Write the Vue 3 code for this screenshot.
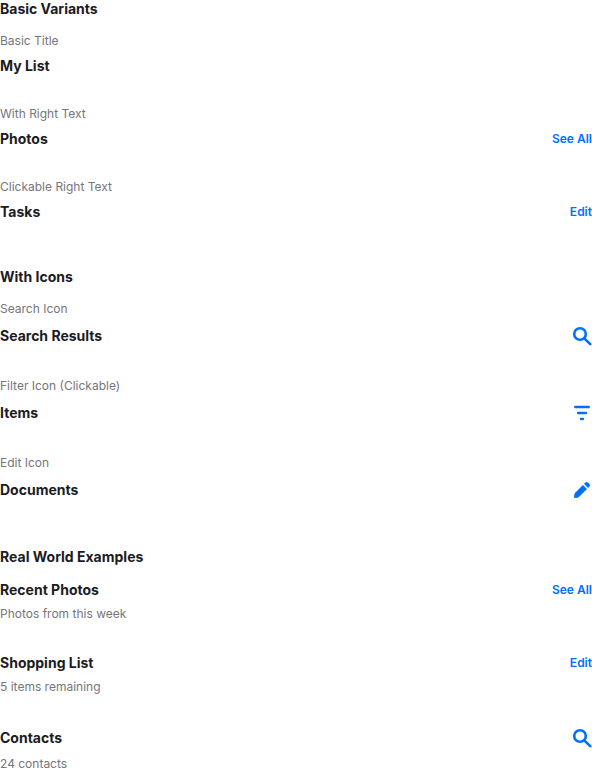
<script setup>
const sections = [
  {
    title: 'Basic Variants',
    items: [
      { caption: 'Basic Title', title: 'My List' },
      { caption: 'With Right Text', title: 'Photos', text: 'See All' },
      { caption: 'Clickable Right Text', title: 'Tasks', text: 'Edit' },
    ],
  },
  {
    title: 'With Icons',
    items: [
      { caption: 'Search Icon', title: 'Search Results', icon: 'search' },
      { caption: 'Filter Icon (Clickable)', title: 'Items', icon: 'filter' },
      { caption: 'Edit Icon', title: 'Documents', icon: 'edit' },
    ],
  },
  {
    title: 'Real World Examples',
    items: [
      { title: 'Recent Photos', text: 'See All', note: 'Photos from this week' },
      { title: 'Shopping List', text: 'Edit', note: '5 items remaining' },
      { title: 'Contacts', icon: 'search', note: '24 contacts' },
    ],
  },
]
</script>

<template>
  <main class="page">
    <section v-for="section in sections" :key="section.title" class="section">
      <h2 class="title">{{ section.title }}</h2>
      <div v-for="item in section.items" :key="item.title" class="item">
        <p v-if="item.caption" class="caption">{{ item.caption }}</p>
        <header class="row">
          <h3 class="title">{{ item.title }}</h3>
          <button v-if="item.text" type="button" class="action">{{ item.text }}</button>
          <button v-if="item.icon" type="button" class="action icon" :aria-label="item.icon">
            <svg v-if="item.icon === 'search'" viewBox="0 0 20 21" fill="none" stroke="currentColor" stroke-width="2.6" stroke-linecap="round">
              <circle cx="8" cy="9" r="5.8" />
              <path d="M12.3 13.3 18.2 19.2" />
            </svg>
            <svg v-else-if="item.icon === 'filter'" viewBox="0 0 20 21" fill="none" stroke="currentColor" stroke-width="2.3" stroke-linecap="round">
              <path d="M3.2 5H16.8M6 11H14M8.9 17H11.1" />
            </svg>
            <svg v-else viewBox="0 0 20 21" fill="currentColor">
              <path d="M10.9 6 15 10.1 6.8 18.1Q6.3 18.6 5.6 18.7L3 19Q2 19 2.1 18L2.4 15.4Q2.5 14.6 3 14.1ZM12 4.8 13.4 3.4Q14.7 2.4 16 3.5L17.4 4.9Q18.6 6.2 17.5 7.5L16.1 9Z" />
            </svg>
          </button>
        </header>
        <p v-if="item.note" class="caption">{{ item.note }}</p>
      </div>
    </section>
  </main>
</template>

<style>
body {
  background: #fff;
}
</style>

<style scoped>
.page {
  display: flex;
  flex-direction: column;
  gap: 48px;
  font-family: Inter, sans-serif;
}
.section {
  display: flex;
  flex-direction: column;
}
.title {
  margin: 0;
  font-size: 14px;
  line-height: 17px;
  font-weight: 700;
  color: #1c1b1f;
}
.item {
  display: flex;
  flex-direction: column;
  gap: 8px;
  margin-top: 16px;
}
.item + .item {
  margin-top: 32px;
}
.caption {
  margin: 0;
  font-size: 12px;
  line-height: 16px;
  color: #75757b;
}
.row {
  display: flex;
  align-items: center;
  justify-content: space-between;
}
.action {
  margin: 0;
  padding: 0;
  border: 0;
  background: none;
  font: 600 12px/16px Inter, sans-serif;
  color: #006fff;
  cursor: pointer;
}
.icon svg {
  display: block;
  width: 20px;
  height: 21px;
}
</style>
